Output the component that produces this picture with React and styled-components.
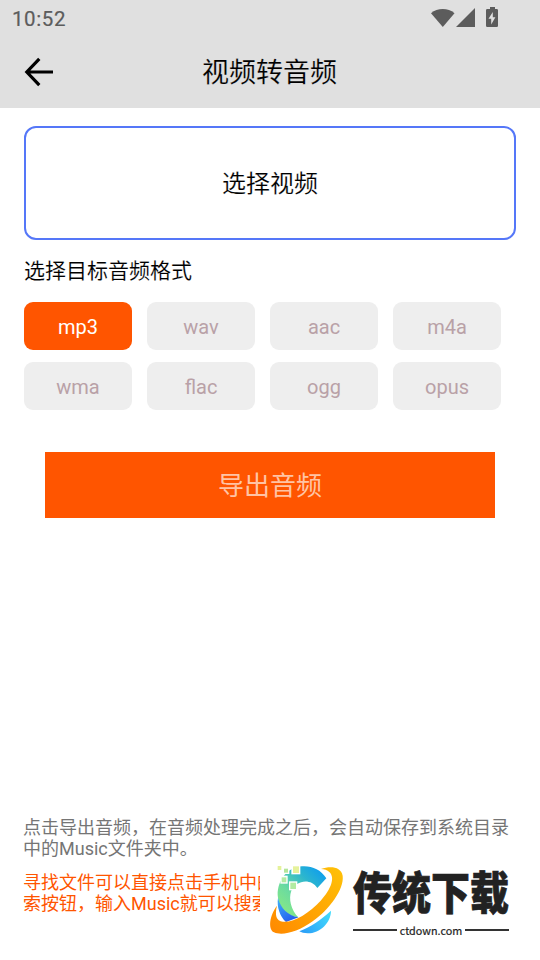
import React, { useState } from 'react'
import styled, { createGlobalStyle } from 'styled-components'


const formats = ['mp3', 'wav', 'aac', 'm4a', 'wma', 'flac', 'ogg', 'opus']


const StatusIcons = () => (
  <svg width="70" height="22" viewBox="0 0 70 22" fill="#5c5c5c">
    <path d="M1 6.2C7.500 .7 18 .7 24.500 6.200L12.800 20Z" />
    <path d="M45 1v19H26Z" />
    <path fillRule="evenodd" d="M60 0h5v2h1.700q1.300 0 1.300 1.300v15.400q0 1.300-1.300 1.300h-9.400q-1.300 0-1.300-1.300V3.300q0-1.300 1.300-1.300h2.700ZM62.800 5l-4.300 6.800h2.700V17.500l4.200-7.200h-2.600Z" />
  </svg>
)

const BackArrow = () => (
  <svg width="30" height="30" viewBox="0 0 30 30" fill="none" stroke="#000" strokeWidth="3.2">
    <path d="M29 15H3M15.300 1.800L2.800 15l12.500 13.200" />
  </svg>
)

const LogoMark = () => (
  <svg width="90" height="90" viewBox="0 0 270 270">
    <defs>
      <linearGradient id="arc" x1="60" y1="180" x2="190" y2="50" gradientUnits="userSpaceOnUse">
        <stop offset="0" stopColor="#8aea82" />
        <stop offset=".35" stopColor="#6bdba0" />
        <stop offset=".7" stopColor="#2bb5cf" />
        <stop offset="1" stopColor="#0d9cf0" />
      </linearGradient>
      <linearGradient id="deep" x1="50" y1="145" x2="90" y2="205" gradientUnits="userSpaceOnUse">
        <stop offset="0" stopColor="#39a4f5" />
        <stop offset="1" stopColor="#2455ee" />
      </linearGradient>
      <linearGradient id="tail" x1="120" y1="235" x2="205" y2="170" gradientUnits="userSpaceOnUse">
        <stop offset="0" stopColor="#2b9df7" />
        <stop offset="1" stopColor="#42dcfc" />
      </linearGradient>
      <linearGradient id="ring" x1="30" y1="230" x2="240" y2="40" gradientUnits="userSpaceOnUse">
        <stop offset="0" stopColor="#ff8a00" />
        <stop offset="1" stopColor="#ffc107" />
      </linearGradient>
    </defs>
    <path fill="url(#arc)" d="M193 70C176 43 149 32 120 34C76 37 47 75 47 120C48 158 75 184 109 187C87 164 79 132 88 107C101 77 145 67 166 99Z" />
    <path fill="url(#deep)" d="M48 129C55 158 77 182 110 187L72 201C53 184 44 155 48 129Z" />
    <path fill="url(#tail)" d="M112 229C147 215 178 194 207 167C207 202 175 235 137 235C127 235 118 233 112 229Z" />
    <path fill="url(#ring)" d="M177 42C207 32 237 36 242 62C247 103 202 163 152 199C109 230 61 244 36 232C17 222 23 180 45 152C38 180 42 198 63 200C96 203 142 174 176 137C208 102 220 67 202 51C196 45 187 43 177 42Z" />
    <g fill="#fff">
      <rect x="62" y="36" width="20" height="21" />
      <rect x="55" y="62" width="22" height="24" />
      <rect x="81" y="79" width="25" height="27" />
      <rect x="88" y="30" width="27" height="28" />
    </g>
    <rect x="47" y="33" width="11" height="12" fill="#e5f29a" />
    <rect x="66" y="41" width="12" height="12" fill="#b4e69a" />
    <rect x="93" y="34" width="18" height="20" fill="#e6f29b" />
    <rect x="59" y="67" width="14" height="15" fill="#b3eba3" />
    <rect x="85" y="83" width="17" height="19" fill="#b2eba2" />
  </svg>
)


const App = () => {

  const [selected, setSelected] = useState('mp3')

  return (
    <Screen>
      <GlobalStyle />

      <StatusBar>
        <span>10:52</span>
        <StatusIcons />
      </StatusBar>

      <Header>
        <BackButton aria-label="返回"><BackArrow /></BackButton>
        <h1>视频转音频</h1>
      </Header>

      <Content>
        <SelectVideo>选择视频</SelectVideo>
        <Label>选择目标音频格式</Label>
        <Formats>
          {formats.map((format) => (
            <Format key={format} $active={format === selected} onClick={() => setSelected(format)}>
              {format}
            </Format>
          ))}
        </Formats>
        <ExportButton>导出音频</ExportButton>
      </Content>

      <Footer>
        <Note>点击导出音频，在音频处理完成之后，会自动保存到系统目录<br />中的Music文件夹中。</Note>
        <FooterRow>
          <Hint>寻找文件可以直接点击手机中的<br />索按钮，输入Music就可以搜索</Hint>
          <Logo>
            <LogoMark />
            <Brand>
              <BrandName>传统下载</BrandName>
              <BrandUrl>ctdown.com</BrandUrl>
            </Brand>
          </Logo>
        </FooterRow>
      </Footer>
    </Screen>
  )
}

export default App

const GlobalStyle = createGlobalStyle`
  * {
    box-sizing: border-box;
  }
  body {
    margin: 0;
    background: #fff;
    font-family: Roboto, "Noto Sans CJK SC", sans-serif;
  }
  button {
    border: none;
    padding: 0;
    font-family: inherit;
    cursor: pointer;
  }
`

const Screen = styled.div`
  display: flex;
  flex-direction: column;
  width: 540px;
  height: 960px;
  overflow: hidden;
  background: #fff;
`

const StatusBar = styled.div`
  display: flex;
  justify-content: space-between;
  height: 36px;
  padding: 7px 40px 0 12px;
  background: #e0e0e0;

  span {
    color: #5c5c5c;
    font-size: 20.5px;
    font-weight: 400;
    line-height: 24px;
    letter-spacing: .6px;
    -webkit-text-stroke: .2px #5c5c5c;
  }
`

const Header = styled.header`
  display: grid;
  grid-template-columns: 60px 1fr 60px;
  align-items: center;
  height: 72px;
  background: #e0e0e0;

  h1 {
    margin: 0;
    padding: 2px 1px 0 0;
    color: #000;
    font-size: 27px;
    font-weight: 400;
    line-height: 40px;
    text-align: center;
    -webkit-text-stroke: .15px #e0e0e0;
  }
`

const BackButton = styled.button`
  display: flex;
  margin-left: 24px;
  background: none;
`

const Content = styled.main`
  display: flex;
  flex-direction: column;
  padding: 18px 24px 0;
`

const SelectVideo = styled.button`
  height: 114px;
  padding-bottom: 3px;
  border: 2px solid #5577f8;
  border-radius: 12px;
  background: #fff;
  color: #000;
  font-size: 24px;
  -webkit-text-stroke: .15px #fff;
`

const Label = styled.div`
  margin-top: 16px;
  color: #000;
  font-size: 21px;
  line-height: 30px;
  -webkit-text-stroke: .12px #fff;
`

const Formats = styled.div`
  display: grid;
  grid-template-columns: repeat(4, 108px);
  grid-auto-rows: 48px;
  gap: 12px 15px;
  margin-top: 16px;
`

const Format = styled.button`
  padding-top: 2px;
  border-radius: 9px;
  background: ${(props) => (props.$active ? '#ff5500' : '#eeeeee')};
  color: ${(props) => (props.$active ? '#fff' : '#b9a1a7')};
  font-size: 20px;
`

const ExportButton = styled.button`
  height: 66px;
  margin: 42px 21px 0;
  padding-bottom: 3px;
  background: #ff5500;
  color: #ffc4a5;
  font-size: 26px;
`

const Footer = styled.footer`
  margin-top: auto;
  height: 143px;
  padding-left: 23px;
`

const Note = styled.p`
  margin: 0;
  color: #757575;
  font-size: 18px;
  line-height: 21px;
  white-space: nowrap;
`

const FooterRow = styled.div`
  display: flex;
`

const Hint = styled.p`
  width: 237px;
  margin: 13px 0 0;
  overflow: hidden;
  color: #ff5500;
  font-size: 18px;
  line-height: 21px;
  white-space: nowrap;
`

const Logo = styled.div`
  display: flex;
  padding-left: 2px;
  margin-top: -4px;
`

const Brand = styled.div`
  width: 157px;
  padding-top: 15px;
  padding-left: 1px;
`

const BrandName = styled.div`
  height: 40px;
  color: #222;
  font-family: "Noto Sans CJK SC", sans-serif;
  font-size: 39px;
  font-weight: 900;
  line-height: 40px;
  white-space: nowrap;
  transform: scaleY(1.16);
  -webkit-text-stroke: .6px #222;
`

const BrandUrl = styled.div`
  display: flex;
  align-items: center;
  gap: 3px;
  height: 14px;
  margin-top: 13px;
  color: #222;
  font-family: "Noto Sans CJK SC", sans-serif;
  font-size: 10.8px;
  font-weight: 400;
  line-height: 14px;
  -webkit-text-stroke: .2px #222;

  &::before,
  &::after {
    content: "";
    flex: 1;
    height: 2px;
    background: #333;
  }
`
